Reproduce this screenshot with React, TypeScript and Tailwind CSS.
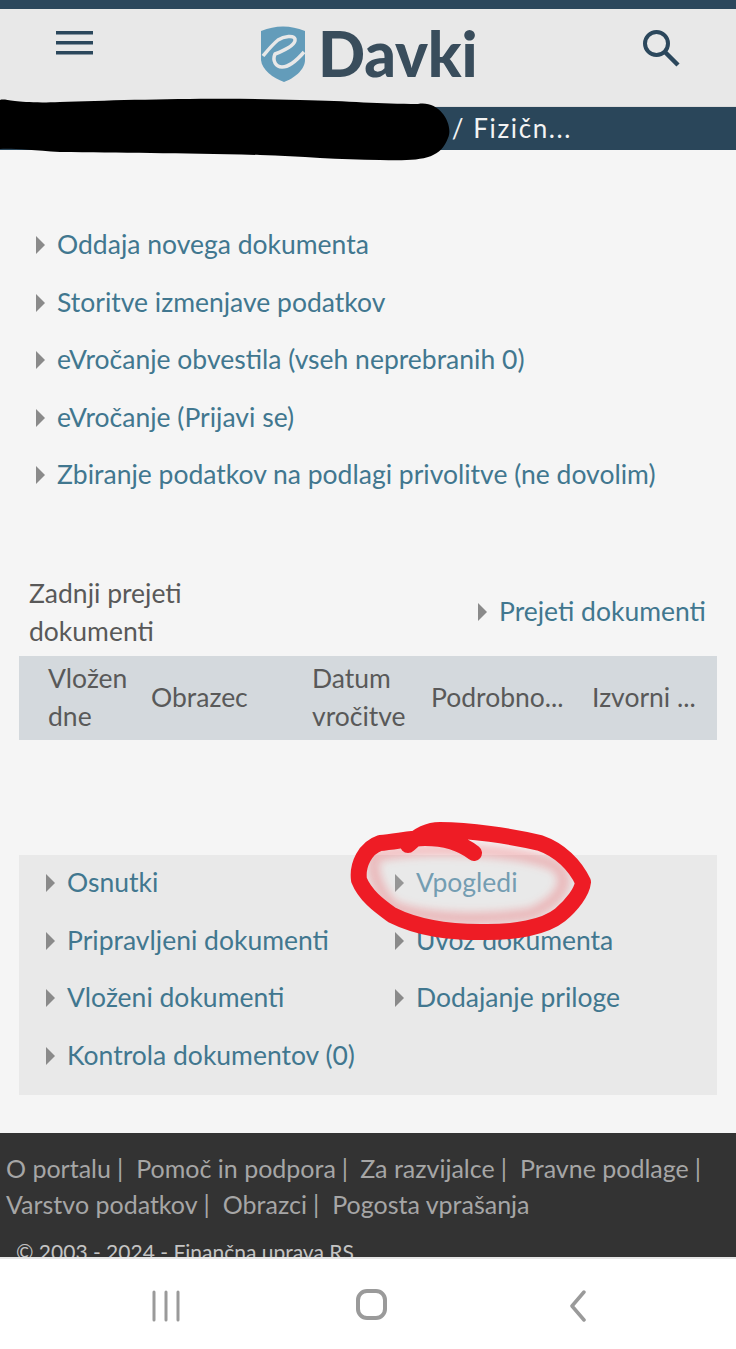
import React from "react";

const Tri = () => <span className="mr-[12px] inline-block h-0 w-0 shrink-0 border-y-[9px] border-l-[9px] border-y-transparent border-l-[#8a8a8a]" />;

const Item = ({ t, faded }: { t: string; faded?: boolean }) => (
  <div className="flex h-[57.5px] items-center whitespace-nowrap">
    <Tri />
    <span className={faded ? "text-[#6392aa]" : "text-[#41778f]"}>{t}</span>
  </div>
);

const TH = ({ className, children }: { className: string; children: React.ReactNode }) => (
  <div className={"leading-[38px] " + className}>{children}</div>
);

export default function App() {
  return (
    <div className="relative flex h-[1349px] w-[736px] flex-col overflow-hidden bg-[#f5f5f5] font-['Lato',sans-serif] text-[26.5px] text-[#595959]">
      <div className="h-[9px] shrink-0 bg-[#2b475c]" />
      <header className="flex h-[98px] shrink-0 items-start bg-[#e8e8e8] shadow-[inset_0_-1px_0_#dcdcdc]">
        <svg className="ml-[56px] mt-[22px]" width="37" height="24" viewBox="0 0 37 24">
          <g fill="#2b475c">
            <rect y="0" width="37" height="3.5" />
            <rect y="10" width="37" height="3.5" />
            <rect y="20" width="37" height="3.5" />
          </g>
        </svg>
        <div className="ml-[167px] mt-[16px] flex items-start">
          <svg width="46" height="58" viewBox="0 0 46 58">
            <path d="M1 6C9 3 15 1.500 23 1.500S37 3 45 6V35C45 45 33 54 24 57C13 53 2 45 1 35Z" fill="#639cba" />
            <path d="M3 31C8 25 12 20 18 15C24 11 34 10 35 14C36 19 28 24 15 29C12 36 16 42 22 42C30 42 38 34 44 27" fill="none" stroke="#e8e8e8" strokeWidth="3.500" />
          </svg>
          <span className="ml-[12px] mt-[-10px] text-[62px] leading-[76px] font-black tracking-[-0.2px] text-[#394d5c]">Davki</span>
        </div>
        <svg className="ml-[163px] mt-[18px]" width="42" height="42" viewBox="0 0 42 42">
          <circle cx="16.500" cy="16.500" r="11.500" fill="none" stroke="#2b475c" strokeWidth="4" />
          <path d="M25 25L38 38" fill="none" stroke="#2b475c" strokeWidth="4.500" />
        </svg>
      </header>
      <div className="flex h-[43px] shrink-0 items-center justify-end bg-[#2a465a] pr-[164px] text-[26px] tracking-[1.6px] text-[#f3f3f3]">
        / Fizičn...
      </div>

      <main className="flex-1 overflow-hidden">
        <section className="pl-[36px] pt-[66.5px]">
          <Item t="Oddaja novega dokumenta" />
          <Item t="Storitve izmenjave podatkov" />
          <Item t="eVročanje obvestila (vseh neprebranih 0)" />
          <Item t="eVročanje (Prijavi se)" />
          <Item t="Zbiranje podatkov na podlagi privolitve (ne dovolim)" />
        </section>

        <section className="mb-[6px] mt-[69.5px] flex items-center pl-[29px]">
          <div className="w-[240px] leading-[38px]">Zadnji prejeti dokumenti</div>
          <div className="ml-[209px]">
            <Item t="Prejeti dokumenti" />
          </div>
        </section>
        <div className="mx-[19px] flex h-[84px] items-center bg-[#d4d9dd] pb-[1px]">
          <TH className="w-[132px] shrink-0 pl-[29px]">Vložen dne</TH>
          <TH className="w-[161px] shrink-0">Obrazec</TH>
          <TH className="w-[119px] shrink-0">Datum vročitve</TH>
          <TH className="w-[161px] shrink-0 whitespace-nowrap">Podrobno...</TH>
          <TH className="shrink-0 whitespace-nowrap">Izvorni ...</TH>
        </div>

        <section className="mx-[19px] mt-[115px] flex h-[240px] bg-[#e9e9e9] pl-[27px]">
          <div className="w-[349px]">
            <Item t="Osnutki" />
            <Item t="Pripravljeni dokumenti" />
            <Item t="Vloženi dokumenti" />
            <Item t="Kontrola dokumentov (0)" />
          </div>
          <div>
            <Item t="Vpogledi" faded />
            <Item t="Uvoz dokumenta" />
            <Item t="Dodajanje priloge" />
          </div>
        </section>
      </main>

      <footer className="h-[124px] shrink-0 overflow-hidden bg-[#333333] pl-[6px] pt-[17px] text-[25px] text-[#a6a6a6]">
        <div className="leading-[36px] whitespace-nowrap">
          <div className="flex">
            <span>O portalu</span><span className="ml-[6px]">|</span>
            <span className="ml-[13px]">Pomoč in podpora</span><span className="ml-[6px]">|</span>
            <span className="ml-[12px]">Za razvijalce</span><span className="ml-[6px]">|</span>
            <span className="ml-[13px]">Pravne podlage</span><span className="ml-[6px]">|</span>
          </div>
          <div className="flex">
            <span>Varstvo podatkov</span><span className="ml-[6px]">|</span>
            <span className="ml-[13px]">Obrazci</span><span className="ml-[6px]">|</span>
            <span className="ml-[13px]">Pogosta vprašanja</span>
          </div>
        </div>
        <div className="ml-[10px] mt-[15px] text-[21px] leading-[30px] text-[#c4c4c4]">© 2003 - 2024 - Finančna uprava RS</div>
      </footer>

      <nav className="flex h-[92px] shrink-0 items-start border-t-[2px] border-[#e6e6e6] bg-white">
        <svg className="ml-[150px] mt-[31px]" width="32" height="32" viewBox="0 0 32 32">
          <g stroke="#9a9a9a" strokeWidth="3" strokeLinecap="round">
            <path d="M4 2V30M16 2V30M28 2V30" />
          </g>
        </svg>
        <svg className="ml-[173px] mt-[29px]" width="34" height="34" viewBox="0 0 34 34">
          <rect x="3" y="3" width="27" height="27" rx="9" fill="none" stroke="#9a9a9a" strokeWidth="4" />
        </svg>
        <svg className="ml-[179px] mt-[31px]" width="24" height="32" viewBox="0 0 24 32">
          <path d="M16 2L4 16L16 30" fill="none" stroke="#9a9a9a" strokeWidth="3.500" strokeLinecap="round" strokeLinejoin="round" />
        </svg>
      </nav>

      {/* soft haze left by the marker around the circled link */}
      <svg className="pointer-events-none absolute left-0 top-0 blur-[4px]" width="736" height="1349" viewBox="0 0 736 1349">
        <path d="M375 856C420 846 520 848 556 866C572 880 562 900 530 914C470 922 420 918 392 906C378 890 370 870 375 856Z" fill="#f1eeee" fillOpacity="0.12" stroke="#ee1c25" strokeOpacity="0.24" strokeWidth="12" />
      </svg>
      {/* hand-drawn redaction and marker ring */}
      <svg className="pointer-events-none absolute left-0 top-0" width="736" height="1349" viewBox="0 0 736 1349">
        <path d="M0 100C6 98 14 104 60 102C120 100 220 97 300 100C350 101 380 104 418 104C440 100 454 125 448 138C440 160 420 161 380 160C340 160 300 156 260 155C180 153 120 153 60 152C30 150 10 148 0 149Z" fill="#000" />
        <path d="M474 853C460 842 445 838 425 838C410 838 395 842 380 843C365 848 357 865 359 880C365 895 378 905 392 915C420 929 450 932 480 932C515 933 545 927 560 915C572 905 582 892 583 882C575 865 560 850 540 843C510 836 470 830 440 830C425 830 415 838 408 845" fill="none" stroke="#ee1c25" strokeWidth="16" strokeLinecap="round" strokeLinejoin="round" />
      </svg>
    </div>
  );
}
